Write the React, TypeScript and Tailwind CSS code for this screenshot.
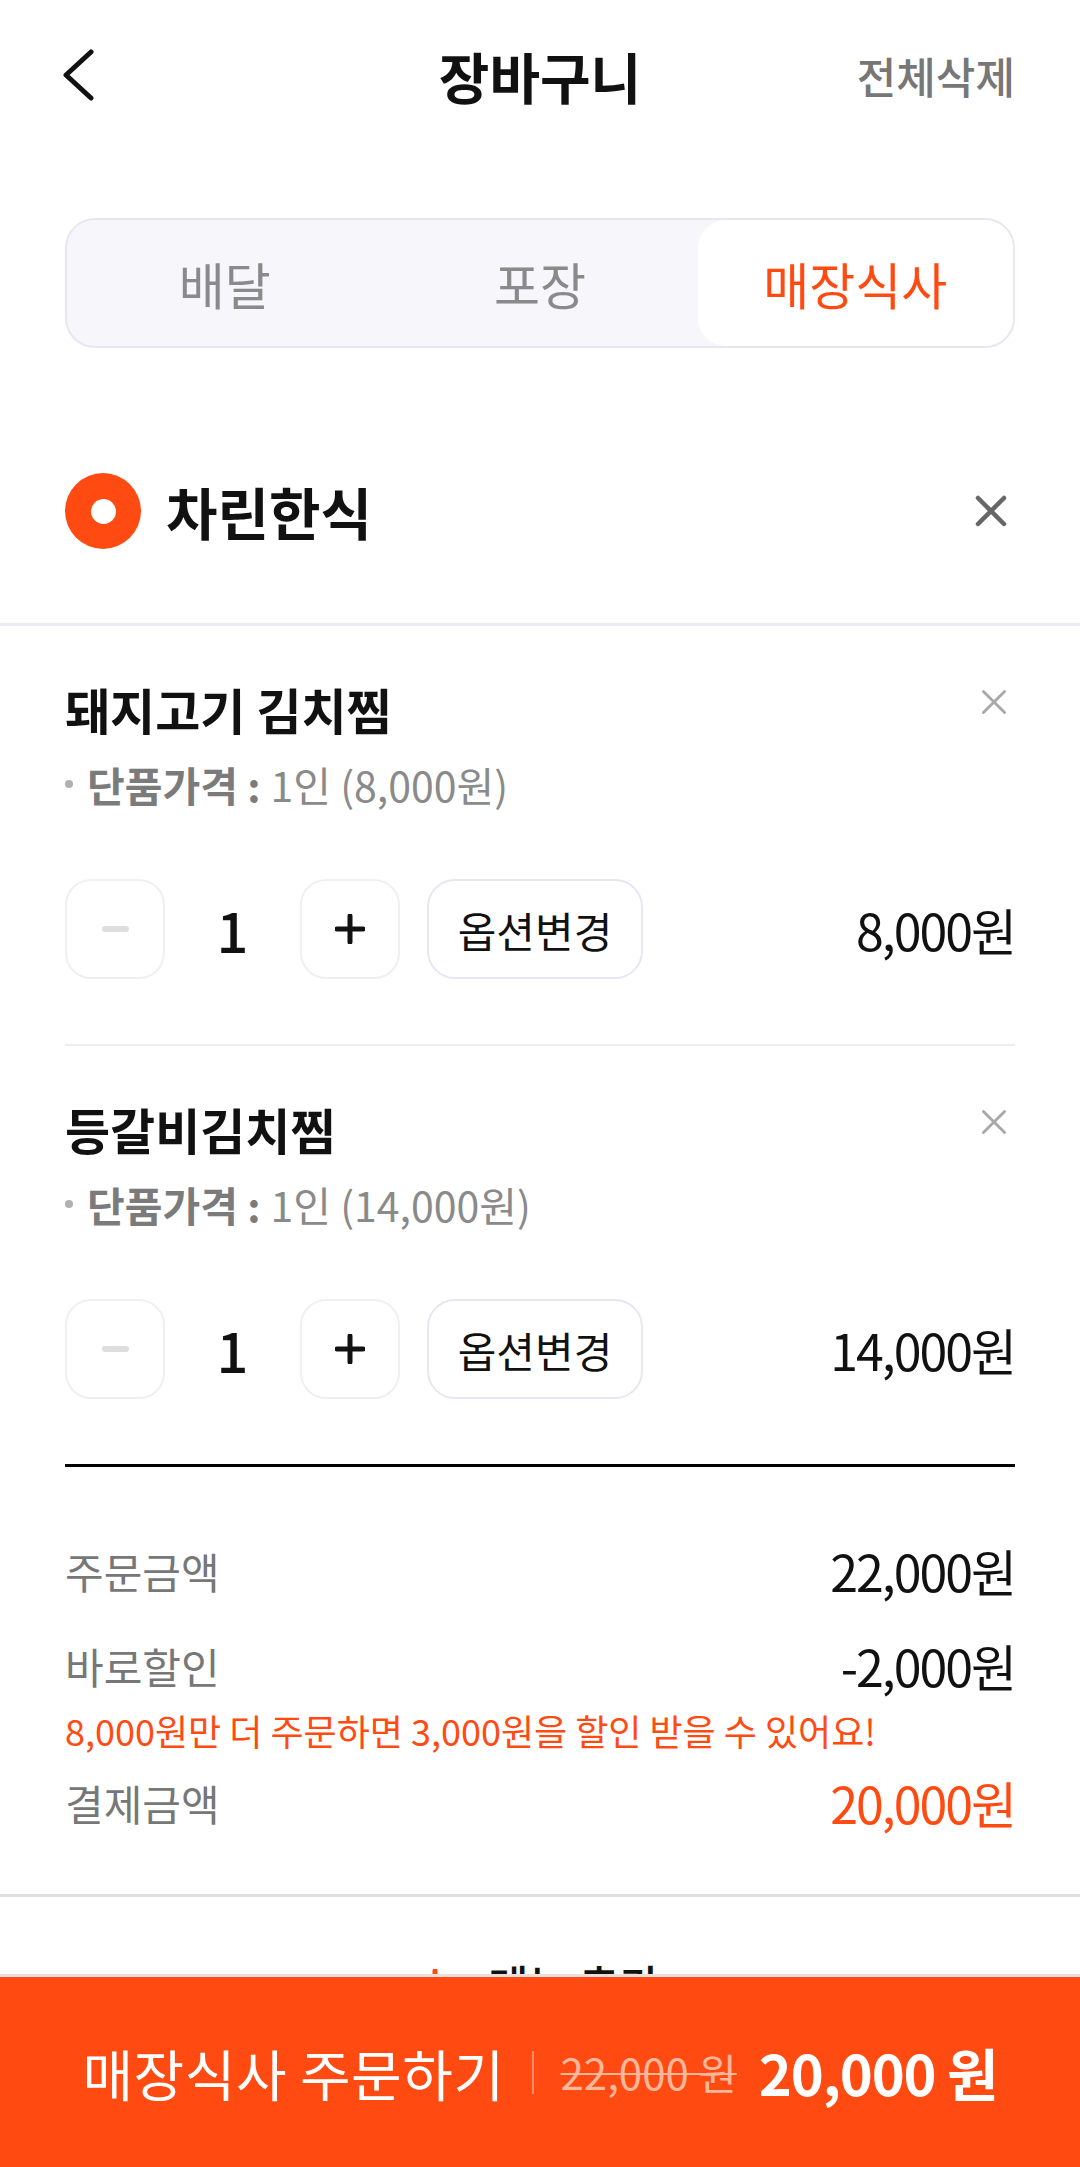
import { useState } from "react";

type CartItem = {
  id: number;
  name: string;
  unitPrice: string;
  price: string;
  qty: number;
};

const ITEMS: CartItem[] = [
  { id: 1, name: "돼지고기 김치찜", unitPrice: "8,000원", price: "8,000원", qty: 1 },
  { id: 2, name: "등갈비김치찜", unitPrice: "14,000원", price: "14,000원", qty: 1 },
];

const TABS = ["배달", "포장", "매장식사"];

function CloseIcon({ size, width, className }: { size: number; width: number; className?: string }) {
  return (
    <svg width={size} height={size} viewBox="0 0 32 32" fill="none" className={className}>
      <path
        d="M3 3 L29 29 M29 3 L3 29"
        stroke="currentColor"
        strokeWidth={width}
        strokeLinecap="round"
      />
    </svg>
  );
}

function PlusIcon({ size, className }: { size: number; className?: string }) {
  return (
    <svg width={size} height={size} viewBox="0 0 30 30" fill="none" className={className}>
      <path d="M15 2 V28 M2 15 H28" stroke="currentColor" strokeWidth={5} strokeLinecap="round" />
    </svg>
  );
}

function CartRow({ item, last }: { item: CartItem; last: boolean }) {
  return (
    <div className="pt-[55px]">
      <div className="flex items-start justify-between">
        <div className="text-[49px] font-semibold leading-[55px] text-[#111]">{item.name}</div>
        <CloseIcon size={26} width={3.5} className="mr-[8px] mt-[8px] text-[#a8a8a8]" />
      </div>
      <div className="mt-[24px] flex items-center text-[41px] leading-[48px] text-[#8a8a8a]">
        <span className="mr-[14px] h-[8px] w-[8px] rounded-full bg-[#b0b0b0]" />
        <span className="font-bold text-[#7b7b7b]">단품가격 :</span>
        <span className="ml-[10px]">1인 ({item.unitPrice})</span>
      </div>
      <div className="mt-[71px] flex h-[100px] items-center">
        <button className="flex h-[100px] w-[100px] items-center justify-center rounded-[26px] border-2 border-[#f0f0f2] bg-white">
          <span className="h-[6px] w-[27px] rounded-full bg-[#dedede]" />
        </button>
        <div className="w-[135px] text-center text-[56px] font-medium leading-none text-[#111]">{item.qty}</div>
        <button className="flex h-[100px] w-[100px] items-center justify-center rounded-[26px] border-2 border-[#f0f0f2] bg-white text-[#111]">
          <PlusIcon size={30} />
        </button>
        <button className="ml-[27px] flex h-[100px] w-[216px] items-center justify-center rounded-[28px] border-2 border-[#e7e7f4] bg-white text-[42px] text-[#111]">
          옵션변경
        </button>
        <div className="ml-auto text-[50px] tracking-[-0.04em] text-[#111]">{item.price}</div>
      </div>
      {last ? (
        <div className="mt-[65px] h-[3px] bg-black" />
      ) : (
        <div className="mt-[65px] h-[2px] bg-[#eeeef2]" />
      )}
    </div>
  );
}

export default function App() {
  const [tab, setTab] = useState(2);

  return (
    <div className="min-h-[2167px] bg-white pb-[200px] font-['Noto_Sans_CJK_KR','Noto_Sans',sans-serif] text-[#111]">
      <header className="grid h-[158px] grid-cols-[1fr_auto_1fr] items-center px-[65px] pb-[8px]">
        <button className="-ml-[3px] justify-self-start">
          <svg width="32" height="52" viewBox="0 0 32 52" fill="none">
            <path
              d="M29 3 L4 26 L29 49"
              stroke="#111"
              strokeWidth={5}
              strokeLinecap="round"
              strokeLinejoin="round"
            />
          </svg>
        </button>
        <h1 className="text-[55px] font-bold leading-none">장바구니</h1>
        <button className="justify-self-end text-[43px] font-medium text-[#777]">전체삭제</button>
      </header>

      <div className="mx-[65px] mt-[60px] grid h-[130px] grid-cols-3 rounded-[30px] border-2 border-[#e7e7f3] bg-[#f6f6fb]">
        {TABS.map((t, i) => (
          <button
            key={t}
            onClick={() => setTab(i)}
            className={
              i === tab
                ? "flex items-center justify-center rounded-[28px] bg-white text-[50px] text-[#ff4b12]"
                : "flex items-center justify-center text-[50px] text-[#8a8a8a]"
            }
          >
            {t}
          </button>
        ))}
      </div>

      <div className="mx-[65px] mt-[125px] flex h-[76px] items-center">
        <div className="flex h-[76px] w-[76px] items-center justify-center rounded-full bg-[#ff4b12]">
          <div className="h-[25px] w-[25px] rounded-full bg-white" />
        </div>
        <div className="ml-[25px] text-[56px] font-bold">차린한식</div>
        <CloseIcon size={32} width={4.5} className="ml-auto mr-[8px] text-[#666]" />
      </div>
      <div className="mt-[74px] h-[3px] bg-[#ebeaf6]" />

      <div className="px-[65px]">
        {ITEMS.map((item, i) => (
          <CartRow key={item.id} item={item} last={i === ITEMS.length - 1} />
        ))}

        <div className="mt-[73px]">
          <div className="flex h-[60px] items-center justify-between">
            <span className="text-[42px] text-[#777]">주문금액</span>
            <span className="text-[50px] tracking-[-0.04em]">22,000원</span>
          </div>
          <div className="mt-[35px] flex h-[60px] items-center justify-between">
            <span className="text-[42px] text-[#777]">바로할인</span>
            <span className="text-[50px] tracking-[-0.04em]">-2,000원</span>
          </div>
          <div className="mt-[13px] text-[36px] leading-[44px] text-[#ff4b12]">
            8,000원만 더 주문하면 3,000원을 할인 받을 수 있어요!
          </div>
          <div className="mt-[20px] flex h-[60px] items-center justify-between">
            <span className="text-[42px] text-[#777]">결제금액</span>
            <span className="text-[50px] tracking-[-0.04em] text-[#ff4b12]">20,000원</span>
          </div>
        </div>
      </div>

      <div className="mt-[62px] h-[3px] bg-[#dedede]" />

      <button className="flex h-[174px] w-full items-center justify-center gap-[38px]">
        <PlusIcon size={30} className="text-[#ff4b12]" />
        <span className="text-[44px] font-medium">메뉴 추가</span>
      </button>

      <div className="fixed inset-x-0 bottom-0 flex h-[193px] items-center justify-center border-t-[3px] border-[#e6dfdb] bg-[#ff4b12] text-white">
        <span className="text-[55px] leading-none tracking-[0.01em]">매장식사 주문하기</span>
        <span className="mx-[27px] h-[43px] w-[2px] bg-[#ff8a66]" />
        <span className="text-[42px] leading-none text-[#ffb79c] line-through decoration-2">22,000 원</span>
        <span className="ml-[22px] text-[56px] font-bold leading-none tracking-[-0.02em]">20,000 원</span>
      </div>
    </div>
  );
}
